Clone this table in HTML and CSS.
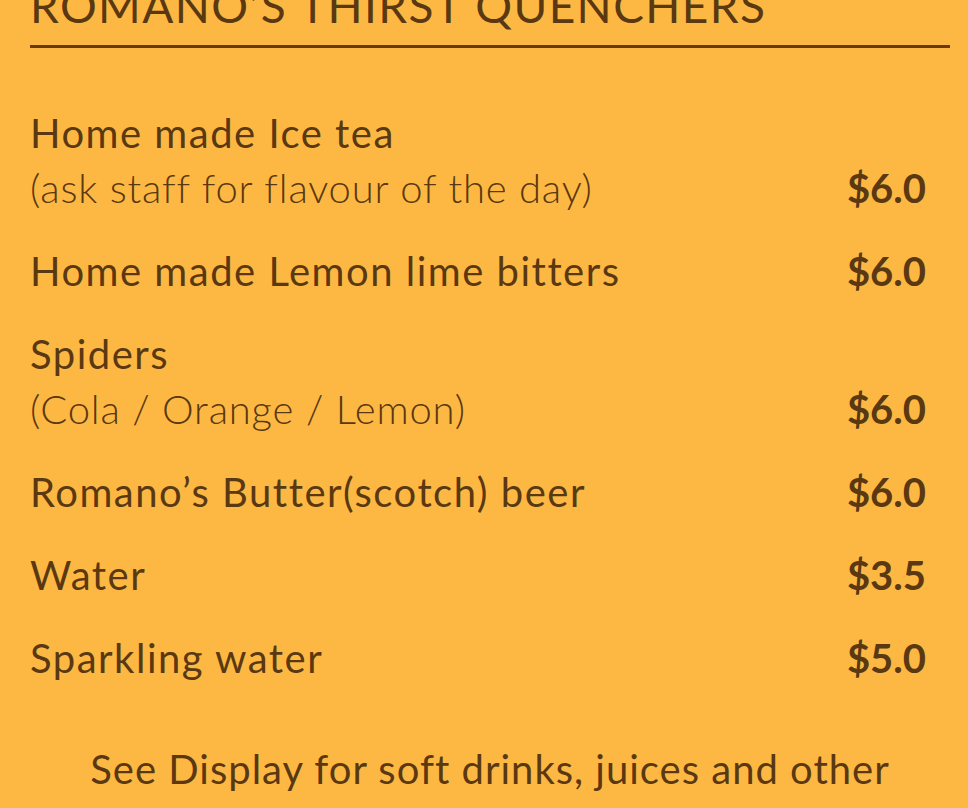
FILE: index.html
```html
<!DOCTYPE html>
<html lang="en">
<head>
<meta charset="utf-8">
<title>Romano's Thirst Quenchers</title>
<link rel="stylesheet" href="styles.css">
</head>
<body>
<main class="menu">
  <header class="menu-head">
    <h1 class="menu-title">ROMANO’S THIRST QUENCHERS</h1>
  </header>
  <ul class="items">
    <li class="item">
      <div class="item-text">
        <span class="item-name">Home made Ice tea</span>
        <span class="item-note">(ask staff for flavour of the day)</span>
      </div>
      <span class="price">$6.0</span>
    </li>
    <li class="item">
      <div class="item-text">
        <span class="item-name">Home made Lemon lime bitters</span>
      </div>
      <span class="price">$6.0</span>
    </li>
    <li class="item">
      <div class="item-text">
        <span class="item-name">Spiders</span>
        <span class="item-note">(Cola / Orange / Lemon)</span>
      </div>
      <span class="price">$6.0</span>
    </li>
    <li class="item">
      <div class="item-text">
        <span class="item-name">Romano’s Butter(scotch) beer</span>
      </div>
      <span class="price">$6.0</span>
    </li>
    <li class="item">
      <div class="item-text">
        <span class="item-name">Water</span>
      </div>
      <span class="price">$3.5</span>
    </li>
    <li class="item">
      <div class="item-text">
        <span class="item-name">Sparkling water</span>
      </div>
      <span class="price">$5.0</span>
    </li>
  </ul>
  <p class="footer-note">See Display for soft drinks, juices and other</p>
</main>
</body>
</html>
```

FILE: styles.css
```css
html, body {
  margin: 0;
  padding: 0;
  background: #fdb843;
  height: 100%;
  overflow: hidden;
}

body {
  font-family: "Lato", "Open Sans", sans-serif;
  color: #5a3811;
}

.menu {
  padding: 0 18px 0 30px;
}

.menu-head {
  display: flex;
  align-items: flex-start;
  border-bottom: 3px solid #6a3a0b;
  height: 45px;
}

.menu-title {
  margin: -20px 0 0 0;
  font-size: 46px;
  line-height: 52px;
  font-weight: 400;
  letter-spacing: 1.4px;
  white-space: nowrap;
  color: #5a3811;
}

.items {
  list-style: none;
  margin: 58px 24px 0 0;
  padding: 0;
}

.item {
  display: flex;
  justify-content: space-between;
  align-items: flex-end;
  margin-bottom: 28px;
}

.item-text {
  display: flex;
  flex-direction: column;
}

.item-name,
.item-note,
.price {
  font-size: 40px;
  line-height: 55px;
  white-space: nowrap;
}

.item-name {
  font-weight: 400;
  letter-spacing: 1.5px;
}

.item-note {
  font-weight: 300;
  letter-spacing: 0.8px;
}

.price {
  font-weight: 700;
}

.footer-note {
  margin: 56px 0 0 0;
  padding: 0 40px;
  text-align: center;
  font-size: 40px;
  line-height: 55px;
  letter-spacing: 1px;
}
```
